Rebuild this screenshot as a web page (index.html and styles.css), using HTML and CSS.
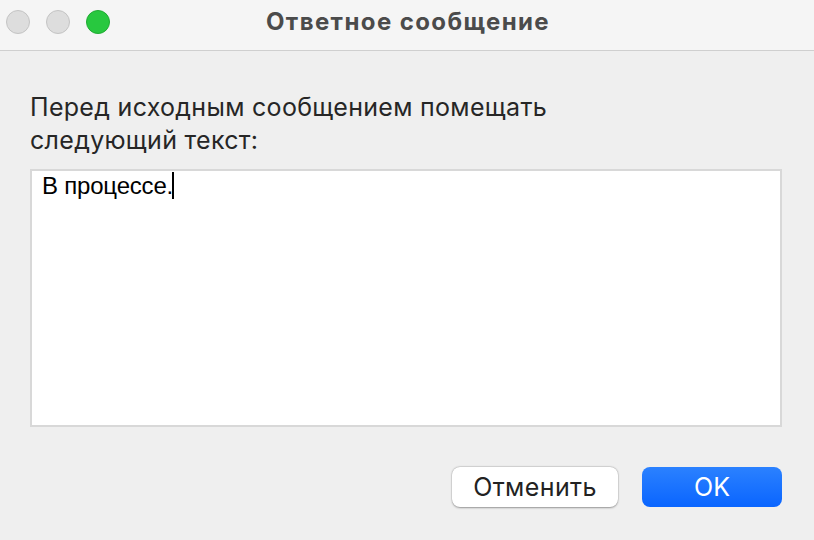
FILE: index.html
```html
<!DOCTYPE html>
<html lang="ru">
<head>
<meta charset="utf-8">
<link rel="stylesheet" href="styles.css">
</head>
<body>
<div class="window">
  <header class="titlebar">
    <div class="lights">
      <span class="light gray"></span>
      <span class="light gray"></span>
      <span class="light green"></span>
    </div>
    <div class="title">Ответное сообщение</div>
  </header>
  <main class="content">
    <p class="label">Перед исходным сообщением помещать<br>следующий текст:</p>
    <div class="field"><span class="val">В процессе.</span><span class="caret"></span></div>
    <div class="actions">
      <button class="btn cancel">Отменить</button>
      <button class="btn ok">OK</button>
    </div>
  </main>
</div>
</body>
</html>
```
FILE: styles.css
```css
* { box-sizing: border-box; }
html, body { margin: 0; padding: 0; }
body {
  width: 814px;
  height: 540px;
  background: #efefef;
  font-family: Inter, "Liberation Sans", Arial, sans-serif;
  overflow: hidden;
}
.window { width: 814px; height: 540px; display: flex; flex-direction: column; }
.titlebar {
  position: relative;
  height: 51px;
  background: #f5f5f5;
  border-bottom: 1px solid #cfcfcf;
  display: flex;
  align-items: center;
  justify-content: center;
}
.lights {
  position: absolute;
  left: 6px;
  top: 10px;
  display: flex;
  gap: 16px;
}
.light {
  width: 24px;
  height: 24px;
  border-radius: 50%;
  display: block;
}
.light.gray { background: #dddddd; border: 1px solid #c4c4c4; }
.light.green { background: #28c83f; border: 1px solid #20ab33; }
.title {
  font-size: 24px;
  font-weight: 700;
  letter-spacing: 1.4px;
  color: #4b4b4b;
  margin-top: -8px;
  margin-left: 2px;
}
.content {
  flex: 1;
  padding: 40px 32px 0 30px;
  display: flex;
  flex-direction: column;
}
.label {
  margin: 0;
  font-size: 25px;
  letter-spacing: 0.3px;
  line-height: 33px;
  color: #262626;
}
.field {
  margin-top: 12px;
  height: 258px;
  background: #fff;
  border: 2px solid #d8d8d8;
  padding: 1px 10px;
  display: flex;
  align-items: flex-start;
  font-family: "Liberation Sans", Arial, sans-serif;
  font-size: 24px;
  line-height: 28px;
  color: #000;
}
.val { letter-spacing: -0.2px; }
.caret {
  display: inline-block;
  width: 2px;
  height: 27px;
  background: #000;
  margin-left: -1px;
}
.actions {
  margin-top: 40px;
  display: flex;
  justify-content: flex-end;
  gap: 24px;
}
.btn {
  height: 40px;
  border-radius: 8px;
  font-family: Inter, "Liberation Sans", Arial, sans-serif;
  font-size: 25px;
  border: none;
  padding: 0;
}
.cancel {
  width: 166px;
  background: #fff;
  color: #222;
  letter-spacing: 0.4px;
  box-shadow: 0 0.5px 2px rgba(0,0,0,0.35), 0 0 0 0.5px rgba(0,0,0,0.08);
}
.ok {
  width: 140px;
  background: linear-gradient(#2b81ff, #0a65ff);
  color: #fff;
}
```
